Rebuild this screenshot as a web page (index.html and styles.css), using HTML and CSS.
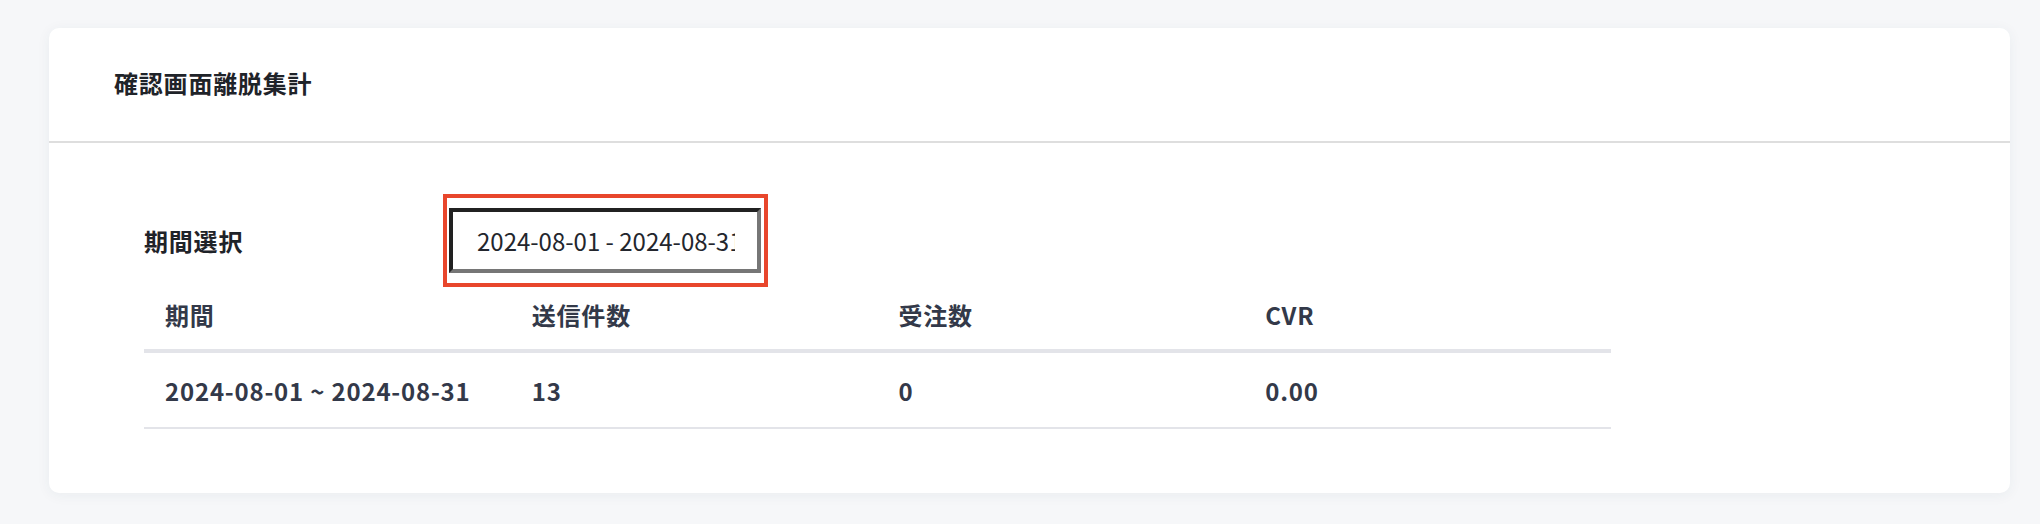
FILE: index.html
```html
<!DOCTYPE html>
<html lang="ja">
<head>
<meta charset="utf-8">
<title>確認画面離脱集計</title>
<link rel="stylesheet" href="styles.css">
</head>
<body>
  <main class="page">
    <section class="card">
      <header class="card-header">
        <h2 class="card-title">確認画面離脱集計</h2>
      </header>
      <div class="card-body">
        <div class="filter-row">
          <label class="filter-label" for="period">期間選択</label>
          <div class="focus-frame">
            <input id="period" class="date-input" type="text" value="2024-08-01 - 2024-08-31" readonly>
          </div>
        </div>
        <table class="summary-table">
          <thead>
            <tr>
              <th>期間</th>
              <th>送信件数</th>
              <th>受注数</th>
              <th>CVR</th>
            </tr>
          </thead>
          <tbody>
            <tr>
              <td>2024-08-01 ~ 2024-08-31</td>
              <td>13</td>
              <td>0</td>
              <td>0.00</td>
            </tr>
          </tbody>
        </table>
      </div>
    </section>
  </main>
</body>
</html>
```

FILE: styles.css
```css
* {
  box-sizing: border-box;
}

html, body {
  margin: 0;
  padding: 0;
}

body {
  background: #f6f7f9;
  font-family: "Noto Sans CJK JP", "Noto Sans", sans-serif;
  color: #333949;
  letter-spacing: 0.8px;
}

.page {
  padding: 28px 30px 28px 49px;
}

.card {
  background: #ffffff;
  border-radius: 10px;
  box-shadow: 0 2px 14px rgba(40, 60, 90, 0.06);
}

.card-header {
  height: 115px;
  display: flex;
  align-items: center;
  padding-left: 65px;
  border-bottom: 2px solid #dedede;
}

.card-title {
  margin: 0 0 4px;
  font-size: 24px;
  font-weight: 700;
  color: #1f2329;
}

.card-body {
  padding: 51px 0 64px 95px;
}

.filter-row {
  display: flex;
  align-items: center;
}

.filter-label {
  width: 299px;
  font-size: 24px;
  font-weight: 700;
  color: #1f2329;
}

.focus-frame {
  border: 4px solid #e8462c;
  padding: 10px 3px 10px 2px;
}

.date-input {
  display: block;
  width: 312px;
  height: 65px;
  border: 4px inset #767676;
  padding: 0 22px 0 24px;
  margin: 0;
  font-family: "Noto Sans CJK JP", "Noto Sans", sans-serif;
  font-size: 24px;
  letter-spacing: 0;
  color: #23262d;
  background: #fff;
  outline: none;
}

.summary-table {
  width: 1467px;
  border-collapse: collapse;
  table-layout: fixed;
  font-size: 24px;
  font-weight: 700;
}

.summary-table th,
.summary-table td {
  text-align: left;
  padding: 0 21px;
}

.summary-table th {
  height: 64px;
  padding-bottom: 8px;
  border-bottom: 4px solid #e3e4e9;
}

.summary-table td {
  height: 77px;
  border-bottom: 2px solid #e3e4e9;
}
```
